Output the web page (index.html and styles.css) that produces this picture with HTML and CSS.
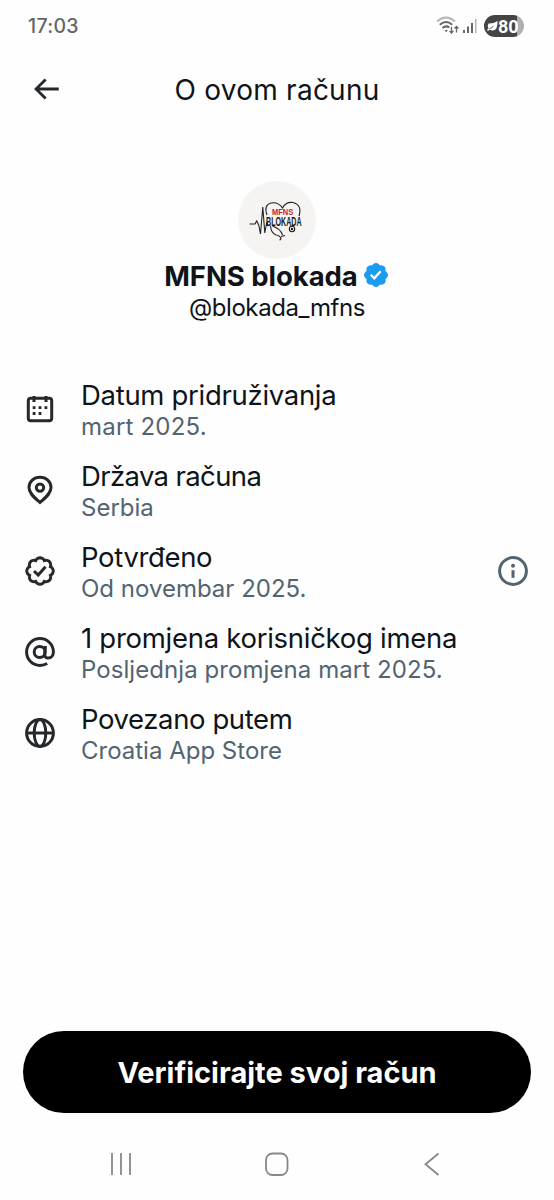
FILE: index.html
```html
<!doctype html>
<html lang="hr">
<head>
<meta charset="utf-8">
<title>O ovom računu</title>
<link rel="stylesheet" href="styles.css">
</head>
<body>
<div class="screen">
  <div class="status">
    <span class="time">17:03</span>
    <div class="indicators">
      <svg class="wifi" width="24" height="20" viewBox="0 0 24 20" fill="none">
        <path d="M1 5.500Q10 -2.500 19 5.500" stroke="#b5b5b5" stroke-width="1.800"/>
        <path d="M3.800 8.700Q10 3.200 16.200 8.700M6.500 12Q10 9 13.300 11.500" stroke="#666" stroke-width="2"/>
        <path d="M8.300 14h3.600l-1.600 2.300z" fill="#666"/>
        <path d="M15.500 11v6M13.600 15l1.900 2 1.900-2M20.500 16.500v-6M18.600 12.500l1.900-2 1.900 2" stroke="#666" stroke-width="1.300"/>
      </svg>
      <svg class="signal" width="16" height="16" viewBox="0 0 16 16">
        <path d="M1 12h2v3H1zM5 8.500h2v6.500H5zM9 5h2v10H9z" fill="#666"/>
        <path d="M13 1h1.500v14H13z" fill="#b5b5b5"/>
      </svg>
      <div class="battery">
        <svg width="11" height="12" viewBox="0 0 11 12"><path d="M1.500 3.500Q6 4 10.500 1Q11 10.500 5.500 10.500Q3.500 10.500 2.800 9.500L1 11L0 10L1.500 8.500Q0 5.500 1.500 3.500z" fill="#fff"/><path d="M2.500 8.500Q5 8 6.500 6" fill="none" stroke="#444" stroke-width=".9"/></svg>
        <span>80</span>
      </div>
    </div>
  </div>

  <div class="header">
    <svg class="back" width="34" height="34" viewBox="0 0 24 24"><path d="M7.414 13l5.043 5.040-1.414 1.420L3.586 12l7.457-7.460 1.414 1.420L7.414 11H21v2H7.414z" fill="#26292c"/></svg>
    <h1>O ovom računu</h1>
  </div>

  <div class="profile">
    <svg class="avatar" width="78" height="78" viewBox="0 0 78 78">
      <circle cx="39" cy="39" r="39" fill="#f5f4f3"/>
      <g fill="none" stroke="#222" stroke-width="1.100">
        <path d="M11.500 43h5.500l1.700-3 2 4 1.800 9 2.300-27 2 26 2-11 1.200 4"/>
        <path d="M29 34Q25.500 24 33 22Q40 20.500 44.500 27Q48 20.500 55 21.500Q64.500 24 61 35"/>
        <path d="M32.500 45Q33 52 38 54Q42 54.500 43 57.500Q42.500 59 41.500 59M34.500 45Q43 48 44.500 54M43 55.500l4-1"/>
        <circle cx="54" cy="48" r="2.700"/>
        <circle cx="54" cy="48" r=".7"/>
      </g>
      <text class="logo-red" transform="translate(34 33.600) scale(.88 1)">MFNS</text>
      <text class="logo-black" transform="translate(28 44.500) scale(.57 1)">BLOKADA</text>
    </svg>
    <div class="name">
      <span>MFNS blokada</span>
      <svg width="28" height="28" viewBox="0 0 22 22"><path d="M20.396 11c-.018-.646-.215-1.275-.57-1.816-.354-.54-.852-.972-1.438-1.246.223-.607.27-1.264.14-1.897-.131-.634-.437-1.218-.882-1.687-.47-.445-1.053-.75-1.687-.882-.633-.13-1.290-.083-1.897.14-.273-.587-.704-1.086-1.245-1.440S11.647 1.620 11 1.604c-.646.017-1.273.213-1.813.568s-.969.854-1.240 1.440c-.608-.223-1.267-.272-1.902-.14-.635.13-1.220.436-1.690.882-.445.47-.749 1.055-.878 1.688-.13.633-.08 1.290.144 1.896-.587.274-1.087.705-1.443 1.245-.356.54-.555 1.170-.574 1.817.02.647.218 1.276.574 1.817.356.54.856.972 1.443 1.245-.224.606-.274 1.263-.144 1.896.13.634.433 1.218.877 1.688.47.443 1.054.747 1.687.878.633.132 1.290.084 1.897-.136.274.586.705 1.084 1.246 1.439.54.354 1.170.551 1.816.569.647-.016 1.276-.213 1.817-.567s.972-.854 1.245-1.440c.604.239 1.266.296 1.903.164.636-.132 1.220-.447 1.680-.907.46-.46.776-1.044.908-1.681s.075-1.299-.165-1.903c.586-.274 1.084-.705 1.439-1.246.354-.54.551-1.170.569-1.816zM9.662 14.850l-3.429-3.428 1.293-1.302 2.072 2.072 4.400-4.794 1.347 1.246z" fill="#1d9bf0"/></svg>
    </div>
    <div class="handle">@blokada_mfns</div>
  </div>

  <ul class="facts">
    <li>
      <svg class="icon" viewBox="0 0 30 30"><rect x="3.300" y="4.300" width="23.400" height="22.400" rx="2.500"/><path d="M9 2v6M21 2v6"/><path class="dots" d="M7.700 12.300h2.800v2.800H7.700zM13.600 12.300h2.800v2.800h-2.800zM19.500 12.300h2.800v2.800h-2.800zM7.700 18.100h2.800v2.800H7.700zM13.600 18.100h2.800v2.800h-2.800z"/></svg>
      <div class="text"><div class="label joined">Datum pridruživanja</div><div class="value date">mart 2025.</div></div>
    </li>
    <li>
      <svg class="icon" viewBox="0 0 30 30"><path d="M15 27.500C9.500 22.500 4 18.500 4 12.600C4 6.500 9 2.300 15 2.300S26 6.500 26 12.600C26 18.500 20.500 22.500 15 27.500z"/><circle cx="15" cy="12.600" r="3.700"/></svg>
      <div class="text"><div class="label country">Država računa</div><div class="value">Serbia</div></div>
    </li>
    <li>
      <svg class="icon" viewBox="0 0 30 30"><path class="seal" transform="translate(-.5 -.5) scale(1.410)" d="M20.396 11c-.018-.646-.215-1.275-.57-1.816-.354-.54-.852-.972-1.438-1.246.223-.607.27-1.264.14-1.897-.131-.634-.437-1.218-.882-1.687-.47-.445-1.053-.75-1.687-.882-.633-.13-1.290-.083-1.897.14-.273-.587-.704-1.086-1.245-1.440S11.647 1.620 11 1.604c-.646.017-1.273.213-1.813.568s-.969.854-1.240 1.440c-.608-.223-1.267-.272-1.902-.14-.635.13-1.220.436-1.690.882-.445.47-.749 1.055-.878 1.688-.13.633-.08 1.290.144 1.896-.587.274-1.087.705-1.443 1.245-.356.54-.555 1.170-.574 1.817.02.647.218 1.276.574 1.817.356.54.856.972 1.443 1.245-.224.606-.274 1.263-.144 1.896.13.634.433 1.218.877 1.688.47.443 1.054.747 1.687.878.633.132 1.290.084 1.897-.136.274.586.705 1.084 1.246 1.439.54.354 1.170.551 1.816.569.647-.016 1.276-.213 1.817-.567s.972-.854 1.245-1.440c.604.239 1.266.296 1.903.164.636-.132 1.220-.447 1.680-.907.46-.46.776-1.044.908-1.681s.075-1.299-.165-1.903c.586-.274 1.084-.705 1.439-1.246.354-.54.551-1.170.569-1.816z"/><path d="M9 15l4.200 4 7.300-8.300"/></svg>
      <div class="text"><div class="label verified">Potvrđeno</div><div class="value">Od novembar 2025.</div></div>
      <svg class="icon info" viewBox="0 0 30 30"><circle cx="15" cy="15" r="13.400"/><circle class="dots" cx="15" cy="9.700" r="2"/><path d="M15 14.200v7.600"/></svg>
    </li>
    <li>
      <svg class="icon" viewBox="0 0 30 30"><circle cx="14.700" cy="15" r="5.500"/><path d="M20.500 9l-.8 7.600c-.3 3 1.300 4.400 3.400 4.400 3.200 0 5.300-2.500 5.300-6C28.400 7.600 22.400 1.600 15 1.600S1.600 7.600 1.600 15 7.600 28.400 15 28.400c2.800 0 5.200-.7 7.200-1.900"/></svg>
      <div class="text"><div class="label changes">1 promjena korisničkog imena</div><div class="value last">Posljednja promjena mart 2025.</div></div>
    </li>
    <li>
      <svg class="icon" viewBox="0 0 30 30"><circle cx="15" cy="15" r="13.400"/><ellipse cx="15" cy="15" rx="5.800" ry="13.400"/><path d="M1.600 15h26.800"/></svg>
      <div class="text"><div class="label connected">Povezano putem</div><div class="value">Croatia App Store</div></div>
    </li>
  </ul>

  <button class="verify"><span>Verificirajte svoj račun</span></button>

  <div class="navbar">
    <svg width="24" height="24" viewBox="0 0 24 24"><path d="M3 1v22M12 1v22M21 1v22"/></svg>
    <svg width="24" height="24" viewBox="0 0 24 24"><rect x="1" y="1.500" width="21.500" height="21.500" rx="6.500"/></svg>
    <svg width="24" height="24" viewBox="0 0 24 24"><path d="M17.500 1.500L4.500 12.200 17.500 23"/></svg>
  </div>
</div>
</body>
</html>
```

FILE: styles.css
```css
* {
  box-sizing: border-box;
}
body {
  margin: 0;
  background: #fefefe;
  color: #0f1419;
  font-family: Inter, "Liberation Sans", sans-serif;
}
.screen {
  display: flex;
  flex-direction: column;
  width: 554px;
  height: 1200px;
}
.status {
  display: flex;
  justify-content: space-between;
  align-items: center;
  height: 52px;
  padding: 0 30px 0 28px;
}
.time {
  font-size: 19.5px;
  font-weight: 500;
  letter-spacing: .3px;
  color: #666;
}
.indicators {
  display: flex;
  align-items: center;
}
.signal {
  margin: 0 6px 0 2px;
}
.battery {
  display: flex;
  align-items: center;
  width: 40px;
  height: 22px;
  padding-left: 3px;
  border-radius: 11px;
  background: linear-gradient(to right, #444 33px, #b0b0b0 33px);
  color: #fff;
  font: 700 18px Roboto, sans-serif;
}
.battery svg {
  flex: none;
}
.header {
  display: grid;
  grid-template-columns: 34px 1fr 34px;
  align-items: center;
  height: 76px;
  padding: 0 29px;
}
.back {
  margin-bottom: 2px;
}
h1 {
  margin: 0;
  font-size: 28px;
  font-weight: 400;
  letter-spacing: .25px;
  text-align: center;
  white-space: nowrap;
}
.profile {
  display: flex;
  flex-direction: column;
  align-items: center;
  padding-top: 53px;
}
.logo-red {
  font: 700 8.5px "Liberation Sans", sans-serif;
  fill: #c8202f;
}
.logo-black {
  font: 700 12.5px "Liberation Sans", sans-serif;
  fill: #1b1b1b;
}
.name {
  display: flex;
  align-items: center;
  gap: 4px;
  height: 33px;
  font-size: 27.5px;
  font-weight: 700;
  letter-spacing: -.05px;
}
.name svg {
  margin-bottom: 2px;
}
.handle {
  font-size: 24px;
  line-height: 32px;
  letter-spacing: -.4px;
}
.facts {
  margin: 46px 0 0;
  padding: 0;
  list-style: none;
}
.facts li {
  display: flex;
  align-items: center;
  height: 81px;
  padding: 0 26px 0 25px;
}
.icon {
  width: 30px;
  height: 30px;
  margin-bottom: 3px;
  fill: none;
  stroke: #26292c;
  stroke-width: 3;
}
.icon .dots {
  fill: #26292c;
  stroke: none;
}
.icon .seal {
  stroke-width: 2.1;
}
.info {
  stroke: #536471;
}
.info .dots {
  fill: #536471;
}
.text {
  flex: 1;
  margin-left: 26px;
  white-space: nowrap;
}
.label {
  font-size: 27.5px;
  line-height: 32px;
}
.value {
  color: #536471;
  font-size: 24px;
  line-height: 31px;
}
/* tracking per line */
.joined {
  letter-spacing: -.3px;
}
.country {
  letter-spacing: -.63px;
}
.verified {
  letter-spacing: -.35px;
}
.changes {
  letter-spacing: -.28px;
}
.connected {
  letter-spacing: -.4px;
}
.date {
  letter-spacing: .2px;
}
.last {
  letter-spacing: .07px;
}
.verify {
  flex: none;
  height: 82px;
  margin: auto 23px 0;
  border: 0;
  border-radius: 41px;
  background: #000;
  color: #fff;
  font: 700 29px Inter, "Liberation Sans", sans-serif;
}
.navbar {
  display: flex;
  justify-content: space-between;
  align-items: center;
  height: 87px;
  padding: 15px 109px 0;
}
.navbar svg {
  fill: none;
  stroke: #888;
  stroke-width: 1.8;
}
```
